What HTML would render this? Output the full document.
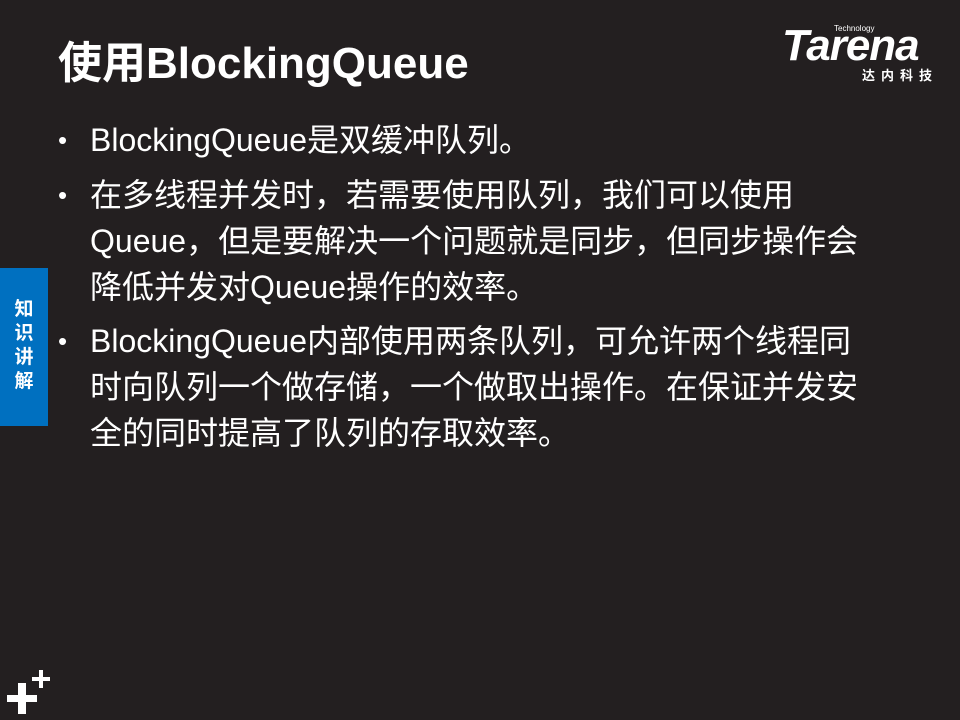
<!DOCTYPE html>
<html><head><meta charset="utf-8"><style>
body{margin:0;width:960px;height:720px;background:#231f20;position:relative;overflow:hidden;font-family:"Liberation Sans","Noto Sans CJK SC",sans-serif;color:#fff}
.t{position:absolute;left:58px;top:34px;font-size:44px;font-weight:bold;line-height:60px}
.b{position:absolute;left:90px;font-size:32px;line-height:46px;white-space:nowrap}
.b:before{content:"•";position:absolute;left:-32px;font-size:26px}
.tab{position:absolute;left:0;top:268px;width:48px;height:158px;background:#0070c0}
.tab div{position:absolute;left:12px;top:30px;width:24px;font-size:19px;font-weight:bold;line-height:24px;text-align:center}
.logo{position:absolute;left:782px;top:22px;width:165px}
</style></head><body>
<div class="t">使用BlockingQueue</div>
<div class="b" style="top:117px">BlockingQueue是双缓冲队列。</div>
<div class="b" style="top:172px">在多线程并发时，若需要使用队列，我们可以使用<br>Queue，但是要解决一个问题就是同步，但同步操作会<br>降低并发对Queue操作的效率。</div>
<div class="b" style="top:318px">BlockingQueue内部使用两条队列，可允许两个线程同<br>时向队列一个做存储，一个做取出操作。在保证并发安<br>全的同时提高了队列的存取效率。</div>
<div class="tab"><div>知<br>识<br>讲<br>解</div></div>
<div class="logo">
<div style="position:absolute;left:52px;top:2px;font-size:8px">Technology</div>
<div style="position:absolute;left:0;top:4px;font-size:44px;font-weight:bold;font-style:italic;letter-spacing:-1px;line-height:40px">Tarena</div>
<div style="position:absolute;left:80px;top:43px;font-size:13px;font-weight:bold;letter-spacing:6px">达内科技</div>
</div>
<svg style="position:absolute;left:0;top:660px" width="60" height="60">
<rect x="7" y="35" width="30" height="7" fill="#fff"/><rect x="18" y="23" width="8" height="31" fill="#fff"/>
<rect x="32" y="17" width="18" height="4" fill="#fff"/><rect x="39" y="10" width="4" height="18" fill="#fff"/>
</svg>
</body></html>
